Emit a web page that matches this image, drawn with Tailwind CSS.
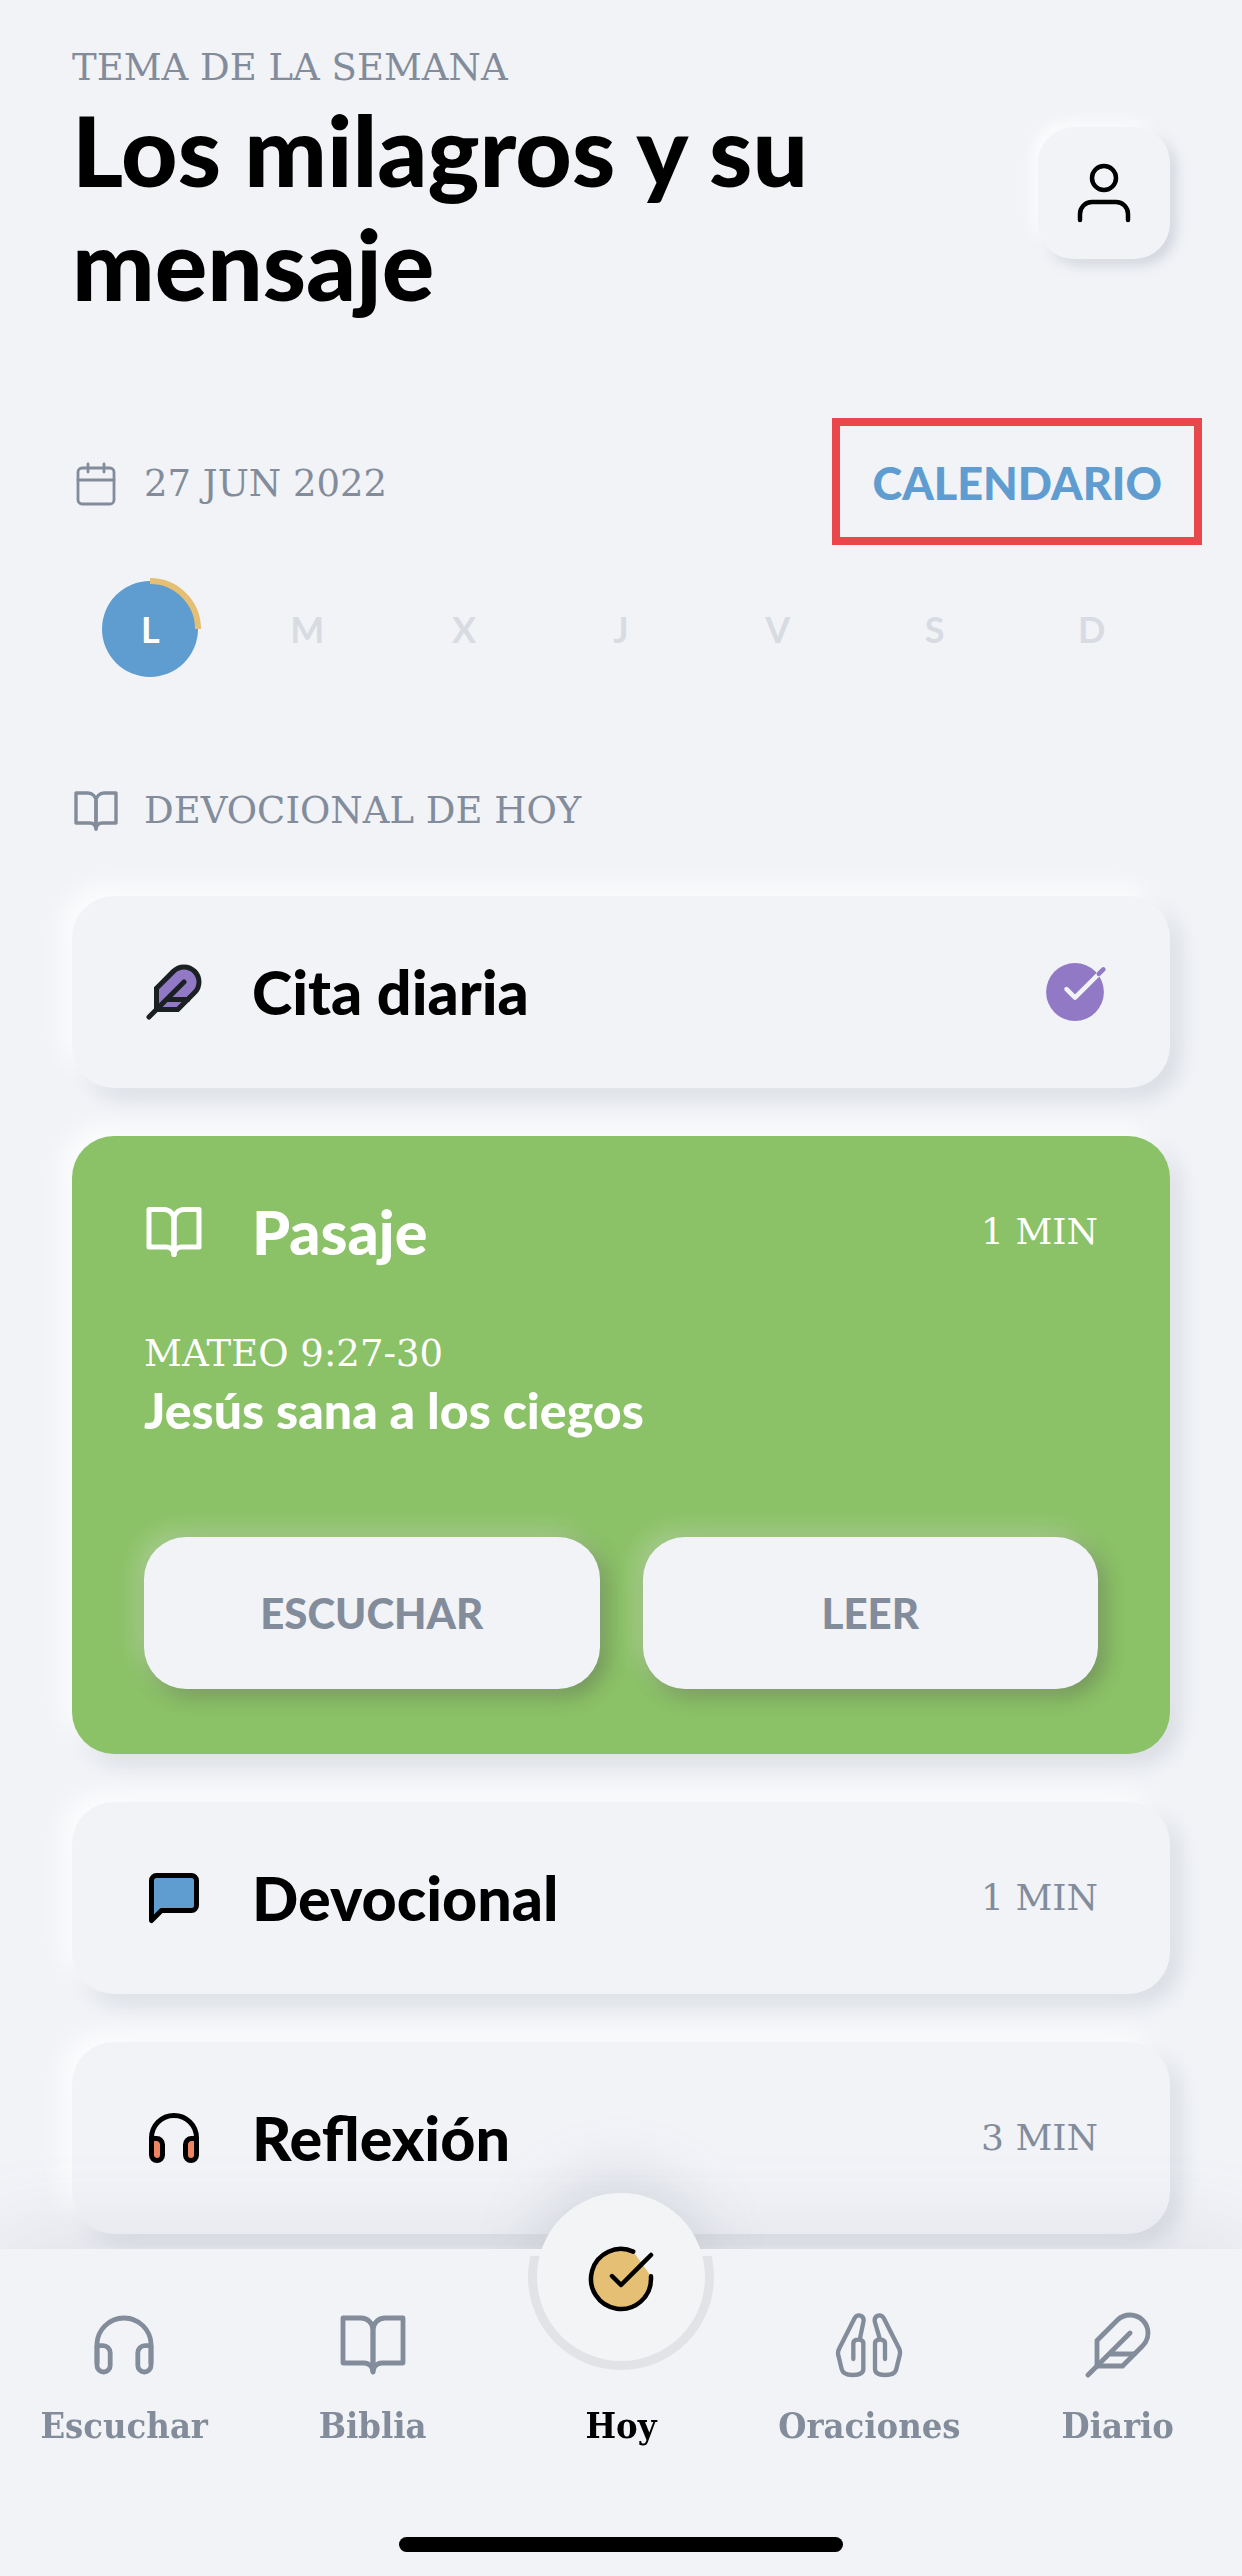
<!DOCTYPE html>
<html lang="es">
<head>
<meta charset="utf-8">
<meta name="viewport" content="width=device-width, initial-scale=1">
<title>Hoy</title>
<script src="https://cdn.jsdelivr.net/npm/@tailwindcss/browser@4"></script>
</head>
<body class="min-h-screen bg-[#f1f3f7] font-['Lato',sans-serif] text-black">

<!-- Shared icon shapes -->
<svg class="hidden" aria-hidden="true">
  <symbol id="book" viewBox="0 0 24 24"><path d="M2 3h6a4 4 0 0 1 4 4v14a3 3 0 0 0-3-3H2z"/><path d="M22 3h-6a4 4 0 0 0-4 4v14a3 3 0 0 1 3-3h7z"/></symbol>
  <symbol id="feather" viewBox="0 0 24 24"><path d="M20.24 12.24a6 6 0 0 0-8.49-8.49L5 10.5V19h8.5z"/><path d="M16 8L2 22M17.5 15H9"/></symbol>
</svg>

<main class="px-[72px] pt-[44px] pb-[327px]">
  <header class="flex items-center justify-between gap-12">
    <div class="pb-[22px]">
      <p class="font-['DejaVu_Serif',serif] text-[37px] leading-[48px] text-[#838c9a]">TEMA DE LA SEMANA</p>
      <h1 class="text-[98px] leading-[114px] font-black">Los milagros y su mensaje</h1>
    </div>
    <button type="button" aria-label="Perfil" class="flex size-[132px] shrink-0 items-center justify-center rounded-[36px] bg-[#f1f3f7] shadow-[-6px_-6px_14px_rgba(255,255,255,0.8),6px_6px_12px_rgba(180,184,196,0.5)]">
      <svg class="size-[72px] fill-none stroke-black" viewBox="0 0 24 24" stroke-width="1.5" stroke-linecap="round" stroke-linejoin="round"><path d="M20 21v-2a4 4 0 0 0-4-4H8a4 4 0 0 0-4 4v2"/><circle cx="12" cy="7" r="4"/></svg>
    </button>
  </header>

  <section class="mt-[76px]">
    <div class="flex items-center justify-between">
      <p class="flex items-center gap-6 pt-1 font-['DejaVu_Serif',serif] text-[37px] leading-[48px] text-[#838c9a]">
        <svg class="size-[48px] fill-none stroke-[#838c9a]" viewBox="0 0 24 24" stroke-width="1.4" stroke-linecap="round" stroke-linejoin="round"><rect x="3" y="4" width="18" height="18" rx="2"/><path d="M16 2v4M8 2v4M3 10h18"/></svg>
        27 JUN 2022
      </p>
      <a href="#calendario" class="-mr-8 flex h-[127px] items-center border-8 border-[#e9474b] px-8 pt-1 text-[45px] leading-none font-black text-[#5f9ccf]">CALENDARIO</a>
    </div>
    <ol class="mt-9 grid grid-cols-7 text-[36px] font-bold text-[#d9dbe2]">
      <li class="flex items-center justify-center">
        <span class="relative flex size-[96px] items-center justify-center rounded-full bg-[#5f9ccf] text-white">L
          <svg class="absolute -inset-[3px] size-[102px] fill-none stroke-[#e5bf73]" viewBox="0 0 102 102" stroke-width="6"><path d="M51 3a48 48 0 0 1 48 48"/></svg>
        </span>
      </li>
      <li class="flex items-center justify-center">M</li>
      <li class="flex items-center justify-center">X</li>
      <li class="flex items-center justify-center">J</li>
      <li class="flex items-center justify-center">V</li>
      <li class="flex items-center justify-center">S</li>
      <li class="flex items-center justify-center">D</li>
    </ol>
  </section>

  <section class="mt-[110px]">
    <h2 class="flex items-center gap-6 font-['DejaVu_Serif',serif] text-[37px] leading-[48px] text-[#838c9a]">
      <svg class="size-[48px] fill-none stroke-[#838c9a]" stroke-width="1.7" stroke-linecap="round" stroke-linejoin="round"><use href="#book"/></svg>
      DEVOCIONAL DE HOY
    </h2>

    <div class="mt-[61px] flex flex-col gap-12">
      <article class="flex items-center rounded-[42px] bg-[#f1f3f7] py-[66px] pr-[61px] pl-[72px] shadow-[-10px_-10px_24px_rgba(255,255,255,0.85),10px_10px_20px_rgba(180,184,196,0.4)]">
        <svg class="size-[60px] fill-[#9179c5] stroke-[#1b2023]" stroke-width="2" stroke-linecap="round"><use href="#feather"/></svg>
        <h3 class="ml-12 flex-1 text-[61px] leading-[60px] font-black">Cita diaria</h3>
        <svg class="-my-1 size-[68px] fill-none" viewBox="0 0 24 24" stroke-width="1.6" stroke-linecap="round" stroke-linejoin="round" role="img" aria-label="Completado">
          <circle cx="12" cy="12" r="10.2" class="fill-[#9179c5]"/>
          <path d="M22 4L12 14.01l-3-3" class="stroke-[#f1f3f7]"/>
          <path d="M20.4 5.6L22 4" class="stroke-[#9179c5]"/>
        </svg>
      </article>

      <article class="rounded-[42px] bg-[#8bc167] px-[72px] pt-[66px] pb-[65px] text-white shadow-[-10px_-10px_24px_rgba(255,255,255,0.85),10px_10px_20px_rgba(180,184,196,0.4)]">
        <div class="flex items-center">
          <svg class="size-[60px] fill-none stroke-white" stroke-width="2" stroke-linecap="round" stroke-linejoin="round"><use href="#book"/></svg>
          <h3 class="ml-12 flex-1 text-[61px] leading-[60px] font-black">Pasaje</h3>
          <span class="font-['DejaVu_Serif',serif] text-[36px] leading-[48px]">1 MIN</span>
        </div>
        <p class="mt-[68px] font-['DejaVu_Serif',serif] text-[37px] leading-[48px]">MATEO 9:27-30</p>
        <p class="text-[50px] leading-[64px] font-black">Jesús sana a los ciegos</p>
        <div class="mt-[95px] grid grid-cols-2 gap-[43px] text-[42px] font-black text-[#838c9a]">
          <button type="button" class="h-[152px] rounded-[42px] bg-[#f1f3f7] shadow-[-6px_-6px_24px_rgba(255,255,255,0.3),6px_6px_20px_rgba(70,80,60,0.45)]">ESCUCHAR</button>
          <button type="button" class="h-[152px] rounded-[42px] bg-[#f1f3f7] shadow-[-6px_-6px_24px_rgba(255,255,255,0.3),6px_6px_20px_rgba(70,80,60,0.45)]">LEER</button>
        </div>
      </article>

      <article class="flex items-center rounded-[42px] bg-[#f1f3f7] px-[72px] py-[66px] shadow-[-10px_-10px_24px_rgba(255,255,255,0.85),10px_10px_20px_rgba(180,184,196,0.4)]">
        <svg class="size-[60px] fill-[#5f9ccf] stroke-black" viewBox="0 0 24 24" stroke-width="2" stroke-linecap="round" stroke-linejoin="round"><path d="M21 15a2 2 0 0 1-2 2H7l-4 4V5a2 2 0 0 1 2-2h14a2 2 0 0 1 2 2z"/></svg>
        <h3 class="ml-12 flex-1 text-[61px] leading-[60px] font-black">Devocional</h3>
        <span class="font-['DejaVu_Serif',serif] text-[36px] leading-[48px] text-[#838c9a]">1 MIN</span>
      </article>

      <article class="flex items-center rounded-[42px] bg-[#f1f3f7] px-[72px] py-[66px] shadow-[-10px_-10px_24px_rgba(255,255,255,0.85),10px_10px_20px_rgba(180,184,196,0.4)]">
        <svg class="size-[60px] fill-none stroke-black" viewBox="0 0 24 24" stroke-width="2" stroke-linecap="round" stroke-linejoin="round"><path d="M3 18v-6a9 9 0 0 1 18 0v6"/><path class="fill-[#ef8560]" d="M3 12.2h2a2.4 2.4 0 0 1 2.4 2.4v4.2a2.2 2.2 0 0 1-4.4 0zM21 12.2h-2a2.4 2.4 0 0 0-2.4 2.4v4.2a2.2 2.2 0 0 0 4.4 0z"/></svg>
        <h3 class="ml-12 flex-1 text-[61px] leading-[60px] font-black">Reflexión</h3>
        <span class="font-['DejaVu_Serif',serif] text-[36px] leading-[48px] text-[#838c9a]">3 MIN</span>
      </article>
    </div>
  </section>
</main>

<nav class="fixed inset-x-0 bottom-0 bg-[#f1f3f7] pb-6 shadow-[0_-6px_80px_rgba(150,152,168,0.22)]">
  <ul class="grid grid-cols-5 font-['DejaVu_Serif_Condensed','DejaVu_Serif',serif] text-[36px] leading-[48px] font-bold text-[#838c9a]">
    <li><a href="#escuchar" class="flex flex-col items-center gap-5 pt-[60px]">
      <svg class="size-[72px] fill-none stroke-current" viewBox="0 0 24 24" stroke-width="1.6" stroke-linecap="round" stroke-linejoin="round"><path d="M3 18v-6a9 9 0 0 1 18 0v6"/><path d="M3 12.2h2a2.4 2.4 0 0 1 2.4 2.4v4.2a2.2 2.2 0 0 1-4.4 0zM21 12.2h-2a2.4 2.4 0 0 0-2.4 2.4v4.2a2.2 2.2 0 0 0 4.4 0z"/></svg>
      Escuchar</a></li>
    <li><a href="#biblia" class="flex flex-col items-center gap-5 pt-[60px]">
      <svg class="size-[72px] fill-none stroke-current" stroke-width="1.6" stroke-linecap="round" stroke-linejoin="round"><use href="#book"/></svg>
      Biblia</a></li>
    <li><a href="#hoy" aria-current="page" class="relative flex flex-col items-center pt-[152px] text-black">
      <!-- Raised disc with a ring under its lower half -->
      <span class="absolute -top-14 left-1/2 size-[168px] -translate-x-1/2 rounded-full shadow-[0_-16px_60px_rgba(150,152,172,0.28)] [clip-path:inset(-120px_-120px_112px_-120px)]"></span>
      <span class="absolute top-[7px] left-1/2 h-[114px] w-[186px] -translate-x-1/2 overflow-hidden">
        <span class="absolute bottom-0 size-[186px] rounded-full bg-[#e1e3e6]"></span>
      </span>
      <span class="absolute -top-14 left-1/2 flex size-[168px] -translate-x-1/2 items-center justify-center rounded-full bg-[#f2f4f6]">
        <svg class="mt-1 size-[72px] fill-[#e5bf73] stroke-black" viewBox="0 0 24 24" stroke-width="1.5" stroke-linecap="round" stroke-linejoin="round"><path d="M22 11.08V12a10 10 0 1 1-5.93-9.14"/><path class="fill-none" d="M22 4L12 14.01l-3-3"/></svg>
      </span>
      Hoy</a></li>
    <li><a href="#oraciones" class="flex flex-col items-center gap-5 pt-[60px]">
      <svg class="size-[72px] fill-none stroke-current" viewBox="99 88 216 216" stroke-width="13" stroke-linecap="round" stroke-linejoin="round"><path d="M180 176L190 128C195 108 173 100 164 115L118 206Q112 216 115 227L125 268Q129 286 158 286Q190 286 190 268V191Q190 180 175 180Q160 180 160 191V238"/><path d="M239 176L225 128C220 108 242 100 251 115L297 206Q302 216 299 227L289 268Q285 286 256 286Q225 286 225 268V191Q225 180 240 180Q255 180 255 191V238"/></svg>
      Oraciones</a></li>
    <li><a href="#diario" class="flex flex-col items-center gap-5 pt-[60px]">
      <svg class="size-[72px] fill-none stroke-current" stroke-width="1.6" stroke-linecap="round"><use href="#feather"/></svg>
      Diario</a></li>
  </ul>
  <div class="mx-auto mt-[88px] h-[15px] w-[444px] rounded-full bg-black"></div>
</nav>
</body>
</html>
